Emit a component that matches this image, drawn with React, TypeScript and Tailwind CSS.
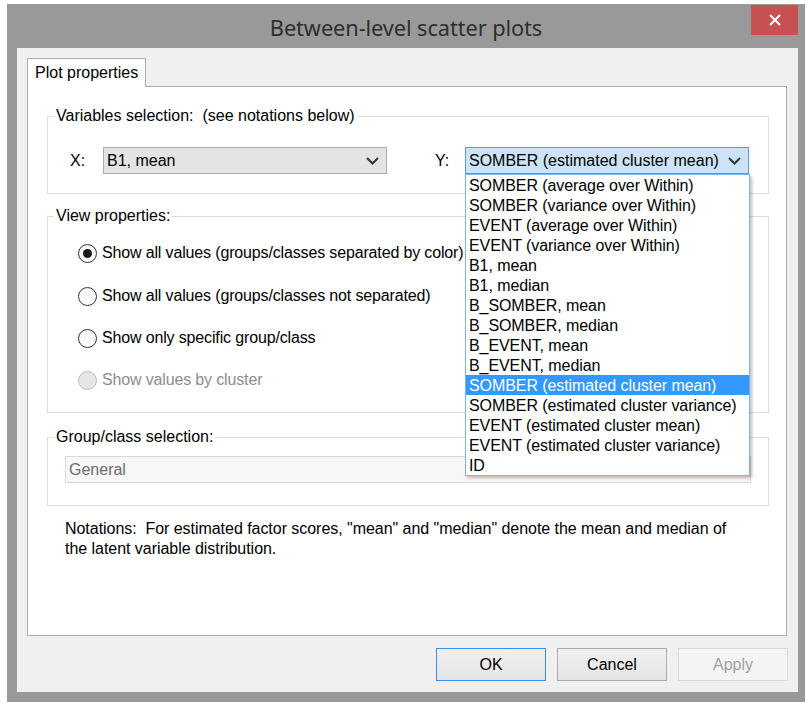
const yOptions = [
  "SOMBER (average over Within)",
  "SOMBER (variance over Within)",
  "EVENT (average over Within)",
  "EVENT (variance over Within)",
  "B1, mean",
  "B1, median",
  "B_SOMBER, mean",
  "B_SOMBER, median",
  "B_EVENT, mean",
  "B_EVENT, median",
  "SOMBER (estimated cluster mean)",
  "SOMBER (estimated cluster variance)",
  "EVENT (estimated cluster mean)",
  "EVENT (estimated cluster variance)",
  "ID",
];

const selectedY = "SOMBER (estimated cluster mean)";

const views = [
  { label: "Show all values (groups/classes separated by color)", checked: true },
  { label: "Show all values (groups/classes not separated)" },
  { label: "Show only specific group/class" },
  { label: "Show values by cluster", disabled: true },
];

function Chevron() {
  return (
    <svg width="13" height="8" viewBox="0 0 13 8" className="shrink-0">
      <path d="M1 1 L6.5 6.5 L12 1" fill="none" stroke="#3a3a3a" strokeWidth="2.2" />
    </svg>
  );
}

function Radio({ checked, disabled }: { checked?: boolean; disabled?: boolean }) {
  return (
    <span
      className={`w-[19px] h-[19px] rounded-full border flex items-center justify-center shrink-0 ${
        disabled
          ? "border-[#bcbcbc] bg-[#e6e6e6]"
          : "border-[#333] bg-gradient-to-b from-[#f4f4f4] to-white"
      }`}
    >
      {checked && <span className="w-[9px] h-[9px] rounded-full bg-[#1a1a1a]" />}
    </span>
  );
}

function GroupBox({
  title,
  className,
  children,
}: {
  title: string;
  className: string;
  children: React.ReactNode;
}) {
  return (
    <fieldset className={`w-[722px] border border-[#dcdcdc] ${className}`}>
      <legend className="ml-[6px] px-[2px] leading-[18px] whitespace-pre">{title}</legend>
      {children}
    </fieldset>
  );
}

export default function App() {
  return (
    <div
      className="w-[812px] h-[707px] bg-white pt-[4px] pl-[7px] text-[16px] text-black"
      style={{ fontFamily: '"Liberation Sans", Arial, sans-serif' }}
    >
      <div className="w-[798px] h-[698px] bg-[#999999] flex flex-col">
        {/* title bar */}
        <div className="relative h-[44px] flex items-center justify-center">
          <span
            className="text-[21.8px] text-[#2e2e2e] pt-[4px] tracking-[-0.1px]"
            style={{ fontFamily: '"Noto Sans", "Open Sans", sans-serif' }}
          >
            Between-level scatter plots
          </span>
          <button className="absolute top-[1px] right-[7px] w-[47px] h-[30px] bg-[#c75050] flex items-center justify-center">
            <svg width="12" height="12" viewBox="0 0 12 12">
              <path d="M1 1 L11 11 M11 1 L1 11" stroke="white" strokeWidth="2" />
            </svg>
          </button>
        </div>

        {/* client area */}
        <div className="ml-[10px] w-[781px] h-[644px] bg-[#f0f0f0] p-[10px] flex flex-col">
          <div className="flex">
            <div className="relative z-10 -mb-px h-[29px] px-[7px] bg-white border border-b-0 border-[#adadad] leading-[28px]">
              Plot properties
            </div>
          </div>

          <div className="w-[760px] h-[550px] bg-white border border-[#adadad] px-[19px] pt-[20px]">
            <GroupBox title="Variables selection:  (see notations below)" className="pt-[22px] pb-[19px]">
              <div className="flex items-center pl-[22px]">
                <span className="w-[33px]">X:</span>
                <div className="w-[284px] h-[27px] bg-[#e4e4e4] border border-[#acacac] flex items-center justify-between pl-[3px] pr-[7px]">
                  <span>B1, mean</span>
                  <Chevron />
                </div>
                <span className="ml-[48px] w-[30px]">Y:</span>
                <div className="relative">
                  <div className="w-[284px] h-[27px] bg-[#cde4f7] border border-[#569de5] flex items-center justify-between pl-[3px] pr-[7px]">
                    <span>{selectedY}</span>
                    <Chevron />
                  </div>
                  <ul className="absolute z-20 left-0 top-[27px] w-[285px] bg-white border border-[#7eb4ea] shadow-[2px_2px_3px_rgba(0,0,0,0.25)] tracking-[-0.08px]">
                    {yOptions.map((o) => (
                      <li
                        key={o}
                        className={`h-[20px] leading-[21px] px-[3px] whitespace-nowrap ${
                          o === selectedY ? "bg-[#3399ff] text-white" : ""
                        }`}
                      >
                        {o}
                      </li>
                    ))}
                  </ul>
                </div>
              </div>
            </GroupBox>

            <GroupBox title="View properties:" className="mt-[13px] pt-[18px] pb-[22px]">
              <div className="flex flex-col gap-[22px] pl-[30px]">
                {views.map((v, i) => (
                  <label
                    key={v.label}
                    className={`h-[20px] flex items-center gap-[5px] ${i === 1 ? "mt-[1px]" : ""}`}
                  >
                    <Radio checked={v.checked} disabled={v.disabled} />
                    <span className={`tracking-[-0.15px] ${v.disabled ? "text-[#8d8d8d]" : ""}`}>
                      {v.label}
                    </span>
                  </label>
                ))}
              </div>
            </GroupBox>

            <GroupBox title="Group/class selection:" className="mt-[15px] pt-[10px] pb-[22px]">
              <div className="mx-[17px] h-[27px] border border-[#d9d9d9] bg-[#f7f7f7] text-[#6d6d6d] flex items-center pl-[3px]">
                General
              </div>
            </GroupBox>

            <p className="mt-[13px] ml-[18px] leading-[20px] tracking-[-0.04px]">
              Notations:&nbsp; For estimated factor scores, "mean" and "median" denote the mean and median of
              <br />
              the latent variable distribution.
            </p>
          </div>

          <div className="mt-[12px] flex justify-end gap-[11px]">
            <button className="w-[110px] h-[33px] border border-[#3c8fe6] bg-gradient-to-b from-[#f0f0f0] to-[#e5e5e5]">
              OK
            </button>
            <button className="w-[110px] h-[33px] border border-[#acacac] bg-gradient-to-b from-[#f0f0f0] to-[#e5e5e5]">
              Cancel
            </button>
            <button className="w-[110px] h-[33px] border border-[#d9d9d9] bg-[#f4f4f4] text-[#a0a0a0]">
              Apply
            </button>
          </div>
        </div>
      </div>
    </div>
  );
}
